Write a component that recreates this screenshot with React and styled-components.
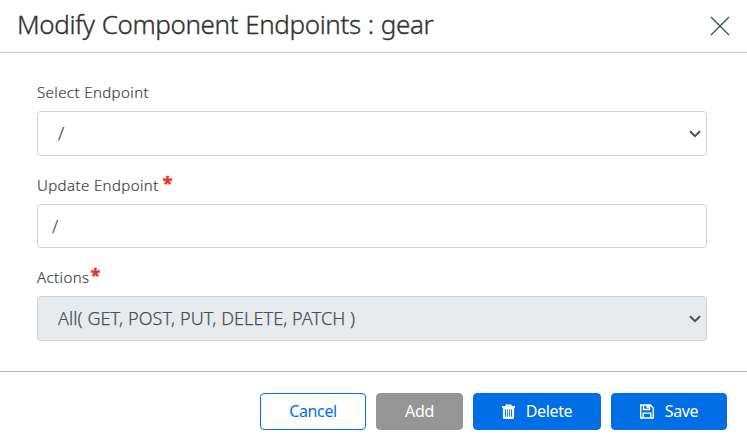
import React from 'react';
import styled, { createGlobalStyle } from 'styled-components';

const GlobalStyle = createGlobalStyle`
  * {
    box-sizing: border-box;
  }

  body {
    margin: 0;
    background: #fff;
    font-family: "Noto Sans", "Open Sans", sans-serif;
  }
`;

const Modal = styled.section`
  display: flex;
  flex-direction: column;
  width: 747px;
  height: 446px;
  overflow: hidden;
`;

const Header = styled.header`
  display: flex;
  justify-content: space-between;
  flex: 0 0 53px;
  padding: 0 17px 0 17px;
  border-bottom: 1px solid #c8c8c8;
`;

const Title = styled.h1`
  margin: 0;
  color: #333;
  font-size: 26px;
  font-weight: 300;
  line-height: 48px;
  letter-spacing: -0.38px;
  word-spacing: 0.7px;
  -webkit-text-stroke: 0.35px #333;
  white-space: pre;
`;

const CloseButton = styled.button`
  margin: 16px 0 0;
  padding: 0;
  width: 20px;
  height: 20px;
  border: 0;
  background: none;

  svg {
    display: block;
  }
`;

const Body = styled.div`
  flex: 0 0 318px;
  padding: 26px 40px 0 37px;
`;

const Field = styled.div`
  margin-bottom: ${(props) => props.$gap || 0}px;
`;

const Label = styled.label`
  display: flex;
  height: 32px;
  color: #444;
  font-size: 15px;
  font-weight: 300;
  line-height: 26px;
  letter-spacing: 0.4px;
  -webkit-text-stroke: 0.2px #444;
  white-space: pre;
`;

const Required = styled.span`
  margin-left: ${(props) => props.$left}px;
  color: #f03020;
  font-size: 18px;
  font-weight: 700;
  line-height: 22px;
  -webkit-text-stroke: 0.4px #f03020;
`;

const SelectWrap = styled.div`
  display: grid;
  grid-template-columns: 1fr 17px;
  align-items: center;
  height: 45px;
  border: 1px solid #ced4da;
  border-radius: 4px;
  background: ${(props) => (props.$disabled ? '#e7ebee' : '#fff')};

  svg {
    grid-area: 1 / 2;
    width: 12px;
    height: 8px;
    pointer-events: none;
  }
`;

const Select = styled.select`
  grid-area: 1 / 1 / 2 / 3;
  width: 100%;
  height: 43px;
  padding: 0 30px 2px 20px;
  border: 0;
  appearance: none;
  background: none;
  color: #495057;
  opacity: 1;
  font: 300 18px "Noto Sans", sans-serif;
  letter-spacing: 0.08px;
  -webkit-text-stroke: 0.25px #495057;
`;

const Input = styled.input`
  display: block;
  width: 100%;
  height: 44px;
  padding: 0 14px 1px;
  border: 1px solid #ced4da;
  border-radius: 4px;
  color: #495057;
  font: 300 18px "Noto Sans", sans-serif;
  -webkit-text-stroke: 0.25px #495057;
`;

const Footer = styled.footer`
  display: flex;
  flex: 1;
  justify-content: flex-end;
  align-items: flex-start;
  gap: 10px;
  padding: 21px 20px 0 0;
  border-top: 1px solid #bbb;
`;

const Button = styled.button`
  display: flex;
  justify-content: center;
  align-items: center;
  gap: ${(props) => props.$gap || 0}px;
  width: ${(props) => props.$width}px;
  height: 37px;
  padding: 0 0 2px;
  border: 1px solid ${(props) => props.$color};
  border-radius: 4px;
  background: ${(props) => (props.$outline ? '#fff' : props.$color)};
  color: ${(props) => (props.$outline ? props.$color : '#fff')};
  font: 400 16px "Noto Sans", sans-serif;
  letter-spacing: -0.35px;

  svg {
    margin-top: 1px;
  }
`;

const Chevron = () => (
  <svg viewBox="0 0 12 8" fill="none" stroke="#495057" strokeWidth="2">
    <path d="M1 1.2 6 6.2 11 1.2" />
  </svg>
);

const TrashIcon = () => (
  <svg width="13" height="15" viewBox="0 0 13 15" fill="none" stroke="#fff">
    <path d="M4.2 2.5V1.2h4.6v1.3" strokeWidth="1.4" />
    <path d="M0 3.1h13" strokeWidth="2" />
    <path d="M1.9 4v9.2q0 .9.9.9h7.4q.9 0 .9-.9V4" strokeWidth="2" />
    <path d="M2 4.5h9M2 13.5h9" strokeWidth="1.4" />
    <path d="M4.5 4v9.5M6.5 4v9.5M8.5 4v9.5" strokeWidth="1.15" />
  </svg>
);

const SaveIcon = () => (
  <svg width="14" height="15" viewBox="0 0 14 15" fill="none" stroke="#fff" strokeWidth="1.4">
    <path d="M.7 1h9.5l3.1 3.1V14H.7z" />
    <path d="M3.5 1v4.5h6V1M3.2 14V9.1h7.6V14" />
    <path d="M6.5 1h2.3v3.2H6.5z" fill="#fff" stroke="none" />
  </svg>
);

export default function App() {
  return (
    <>
      <GlobalStyle />
      <Modal>
        <Header>
          <Title>Modify Component Endpoints : gear</Title>
          <CloseButton aria-label="Close">
            <svg width="20" height="20" viewBox="0 0 20 20" stroke="#33505f" strokeWidth="1.3">
              <path d="m1 1 18 18M19 1 1 19" />
            </svg>
          </CloseButton>
        </Header>
        <Body>
          <Field $gap={16}>
            <Label htmlFor="endpoint">Select Endpoint</Label>
            <SelectWrap>
              <Select id="endpoint">
                <option>/</option>
              </Select>
              <Chevron />
            </SelectWrap>
          </Field>
          <Field $gap={16}>
            <Label htmlFor="update">
              Update Endpoint<Required $left={4}>*</Required>
            </Label>
            <Input id="update" defaultValue="/" />
          </Field>
          <Field>
            <Label htmlFor="actions">
              Actions<Required $left={1}>*</Required>
            </Label>
            <SelectWrap $disabled>
              <Select id="actions" disabled>
                <option>All( GET, POST, PUT, DELETE, PATCH )</option>
              </Select>
              <Chevron />
            </SelectWrap>
          </Field>
        </Body>
        <Footer>
          <Button $width={106} $color="#006fe6" $outline>Cancel</Button>
          <Button $width={87} $color="#969696">Add</Button>
          <Button $width={128} $color="#006fe6" $gap={11}>
            <TrashIcon />
            Delete
          </Button>
          <Button $width={116} $color="#006fe6" $gap={11}>
            <SaveIcon />
            Save
          </Button>
        </Footer>
      </Modal>
    </>
  );
}
